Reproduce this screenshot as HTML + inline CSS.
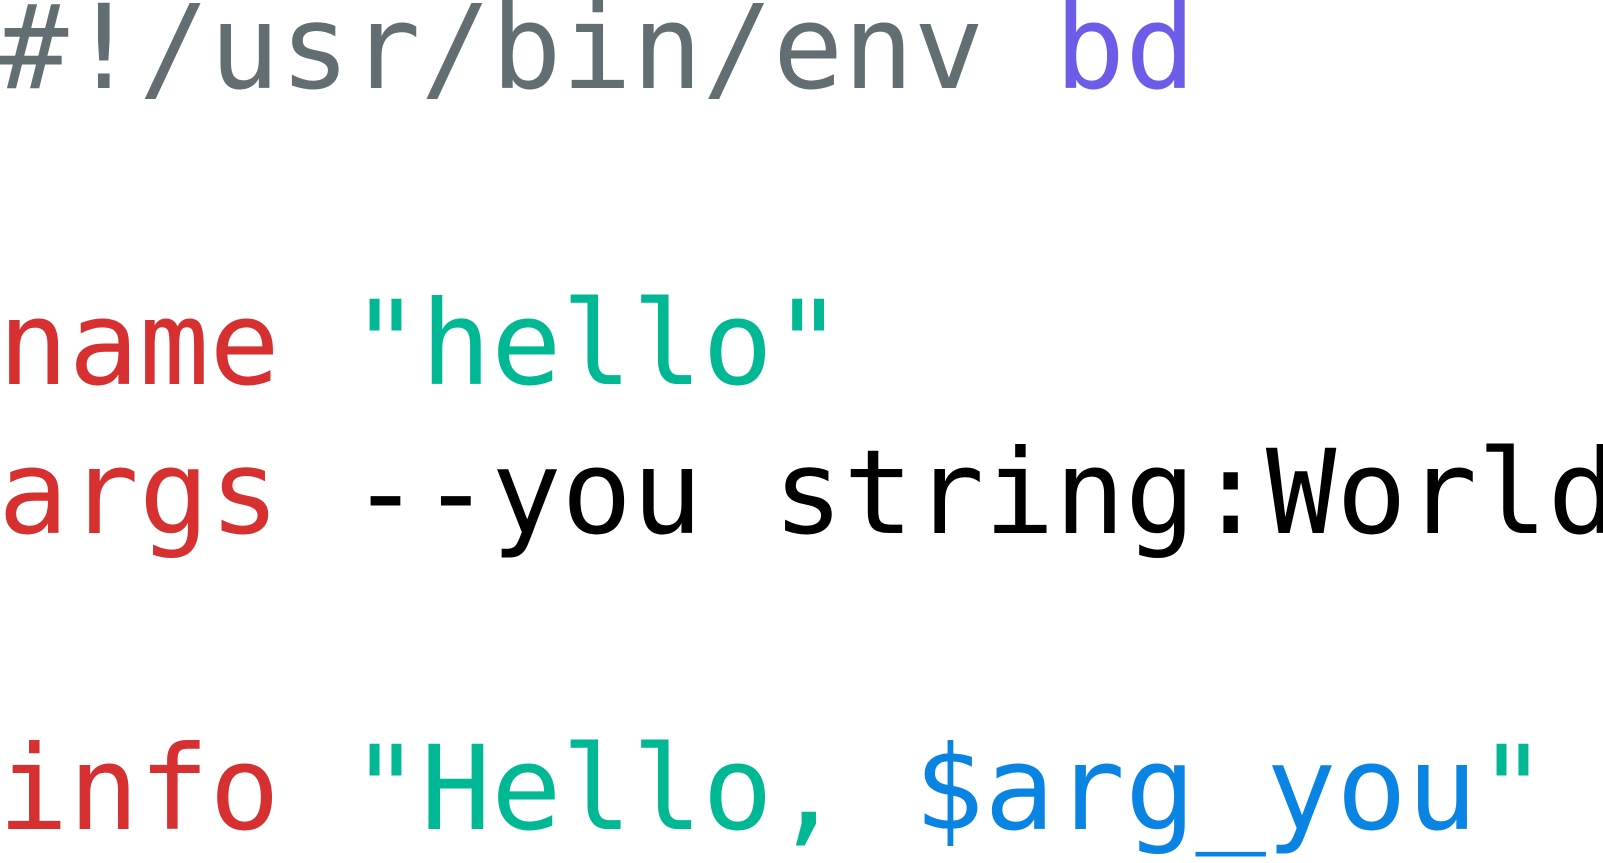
<!DOCTYPE html>
<html><head><meta charset="utf-8"><style>
html,body{margin:0;padding:0;background:#fff;width:1603px;height:853px;overflow:hidden}
pre{margin:0;position:absolute;left:-2px;top:-26px;font-family:"DejaVu Sans Mono","Liberation Mono",monospace;font-size:117px;line-height:148.2px;color:#000;white-space:pre}
.g{color:#636e72}.p{color:#6c5ce7}.r{color:#d63031}.s{color:#00b894}.b{color:#0984e3}
</style></head><body>
<pre><span class="g">#!/usr/bin/env</span> <span class="p">bd</span>

<span class="r">name</span> <span class="s">"hello"</span>
<span class="r">args</span> --you string:World

<span class="r">info</span> <span class="s">"Hello, </span><span class="b">$arg_you</span><span class="s">"</span></pre>
</body></html>
